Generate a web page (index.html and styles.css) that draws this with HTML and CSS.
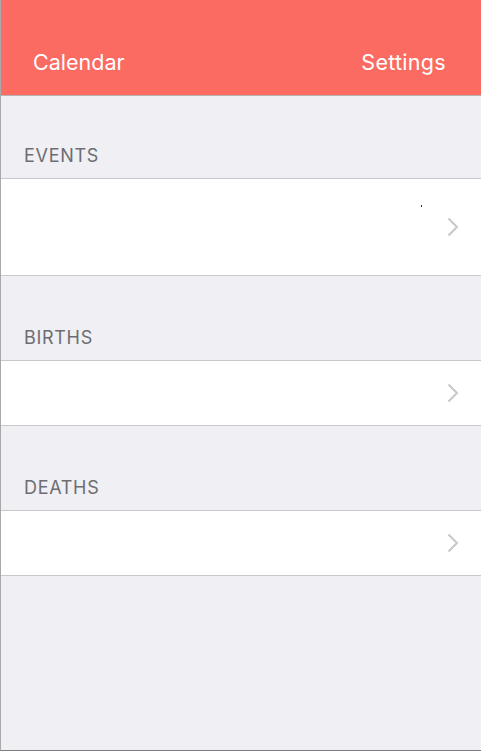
FILE: index.html
```html
<!DOCTYPE html>
<html>
<head>
<meta charset="utf-8">
<link rel="stylesheet" href="styles.css">
</head>
<body>
<div class="screen">
  <header class="navbar">
    <span class="nav-btn">Calendar</span>
    <span class="nav-btn">Settings</span>
  </header>
  <section class="group group-first">
    <div class="group-title">EVENTS</div>
    <div class="cell cell-tall">
      <span class="tick"></span>
      <svg class="chevron" width="12" height="20" viewBox="0 0 12 20"><path d="M1.5 1.5 L10 10 L1.5 18.5" fill="none" stroke="#c7c7cc" stroke-width="2"/></svg>
    </div>
  </section>
  <section class="group">
    <div class="group-title">BIRTHS</div>
    <div class="cell">
      <svg class="chevron" width="12" height="20" viewBox="0 0 12 20"><path d="M1.5 1.5 L10 10 L1.5 18.5" fill="none" stroke="#c7c7cc" stroke-width="2"/></svg>
    </div>
  </section>
  <section class="group">
    <div class="group-title">DEATHS</div>
    <div class="cell">
      <svg class="chevron" width="12" height="20" viewBox="0 0 12 20"><path d="M1.5 1.5 L10 10 L1.5 18.5" fill="none" stroke="#c7c7cc" stroke-width="2"/></svg>
    </div>
  </section>
</div>
</body>
</html>
```
FILE: styles.css
```css
html, body {
  margin: 0;
  padding: 0;
}
body {
  background: #efeff4;
  font-family: Inter, "Liberation Sans", sans-serif;
}
.screen {
  height: 750px;
  border-left: 1px solid #a9a9ab;
  border-bottom: 1px solid #7c7c80;
  background: #efeff4;
  display: flex;
  flex-direction: column;
}
.navbar {
  height: 96px;
  background: #fc6b61;
  border-bottom: 1px solid #b4b4b4;
  display: flex;
  justify-content: space-between;
  align-items: flex-start;
  padding: 49px 35px 0 32px;
  box-sizing: border-box;
  flex: none;
}
.nav-btn {
  color: #ffffff;
  font-size: 21.5px;
  line-height: 26px;
}
.nav-btn + .nav-btn {
  letter-spacing: 0.3px;
}
.group {
  display: flex;
  flex-direction: column;
}
.group-title {
  height: 84px;
  box-sizing: border-box;
  padding: 0 0 11px 23px;
  display: flex;
  align-items: flex-end;
  color: #6d6d72;
  font-size: 18px;
  line-height: 22px;
  letter-spacing: 0.7px;
}
.group-first .group-title {
  height: 82px;
}
.cell {
  height: 64px;
  background: #ffffff;
  border-top: 1px solid #c8c7cc;
  border-bottom: 1px solid #c8c7cc;
  display: flex;
  align-items: center;
  justify-content: flex-end;
  padding-right: 22px;
  position: relative;
}
.cell-tall {
  height: 96px;
}
.chevron {
  display: block;
}
.tick {
  position: absolute;
  left: 420px;
  top: 26px;
  width: 1px;
  height: 2px;
  background: #333;
}
```
